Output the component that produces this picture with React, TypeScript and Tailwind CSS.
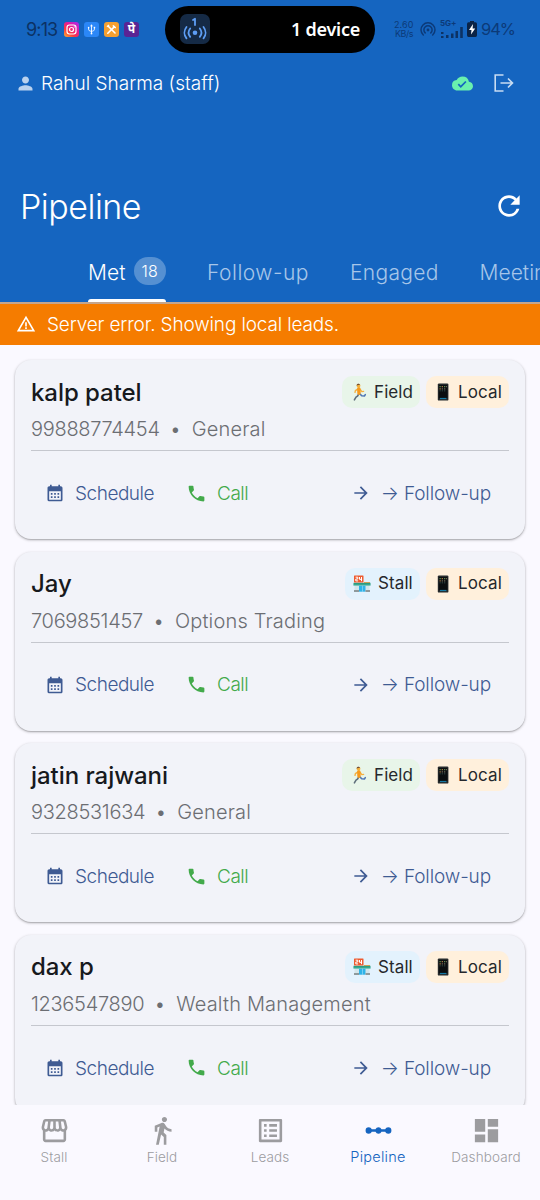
import { useState } from 'react';
import {
  MdArrowForward,
  MdCalendarMonth,
  MdCloudDone,
  MdDashboard,
  MdDirectionsWalk,
  MdLinearScale,
  MdListAlt,
  MdOutlineStorefront,
  MdPerson,
  MdPhone,
  MdRefresh,
  MdWarningAmber,
} from 'react-icons/md';

interface Lead {
  name: string;
  phone: string;
  interest: string;
  source: 'field' | 'stall';
}

const leads: Lead[] = [
  { name: 'kalp patel', phone: '99888774454', interest: 'General', source: 'field' },
  { name: 'Jay', phone: '7069851457', interest: 'Options Trading', source: 'stall' },
  { name: 'jatin rajwani', phone: '9328531634', interest: 'General', source: 'field' },
  { name: 'dax p', phone: '1236547890', interest: 'Wealth Management', source: 'stall' },
];

const navItems = [
  { label: 'Stall', icon: MdOutlineStorefront },
  { label: 'Field', icon: MdDirectionsWalk },
  { label: 'Leads', icon: MdListAlt },
  { label: 'Pipeline', icon: MdLinearScale },
  { label: 'Dashboard', icon: MdDashboard },
];

function RunnerIcon() {
  return (
    <svg viewBox="0 0 18 18" className="h-[18px] w-[18px]" fill="none" strokeLinecap="round" strokeLinejoin="round">
      <path d="M8 10.5 6.5 13.2 5 14.2 3.4 16.8" stroke="#5f6f7c" strokeWidth="1.6" />
      <path d="M8.5 10.5 10.7 12.8 13.4 13 14.3 11.6" stroke="#4f76b4" strokeWidth="1.6" />
      <path d="M7 5.8 4.4 7.6 4 9.4M9 6.2 10.8 8.6 12.6 8.4" stroke="#f5b03e" strokeWidth="1.4" />
      <path d="M7.8 5.8 8 10.2" stroke="#f79a1c" strokeWidth="3.4" />
      <circle cx="7.5" cy="2.7" r="1.9" fill="#f4b23c" />
      <path d="M5.5 2.4C5.7.7 8 .1 9.2 1.4L7.5 2Z" fill="#6d4a35" />
    </svg>
  );
}

function StoreIcon() {
  return (
    <svg viewBox="0 0 18 18" className="h-[18px] w-[18px]">
      <path d="M1.5 9.5h15V16h-15Z" fill="#d3e5ea" />
      <path d="M11 7h6v1.2h-6Z" fill="#f3a24c" />
      <path d="M.5 7.8h17v2.4H.5Z" fill="#2a9d82" />
      <path d="M.5 9.7h17v1H.5Z" fill="#62bfae" />
      <path d="M6 10.7h6.5v6H6Z" fill="#2fb3e8" />
      <path d="M9 10.7h.6v6H9Z" fill="#a5e0f7" />
      <path d="M1 15h5v2H1ZM12.5 15H17v2h-4.5Z" fill="#8f9a9c" />
      <rect x="1" y=".5" width="9.500" height="7" rx=".5" fill="#ee5a2f" />
      <path d="M2.600 2.200h2.200v1.800H2.800v1.900h2.300M6.500 2v2.300h2.600M8.500 2v4.200" fill="none" stroke="#fff" strokeWidth="1" />
    </svg>
  );
}

function MobileIcon() {
  return (
    <svg viewBox="0 0 18 18" className="h-[18px] w-[18px]">
      <rect x="3.8" y=".4" width="10.6" height="17.2" rx="1.2" fill="#252a2c" />
      <rect x="4.8" y="2" width="8.6" height="13.2" fill="#0b0e10" />
      <path d="M5.5 3h1.3v1.2H5.5ZM10 3h1.3v1.2H10Z" fill="#5c8c54" />
      <path d="M7.7 3H9v1.2H7.7ZM5.5 5.2h1.3v1.2H5.5Z" fill="#a67543" />
      <path d="M12 3h1v1.2h-1ZM7.7 5.2H9v1.2H7.7ZM10 5.2h1.3v1.2H10Z" fill="#6b6556" />
      <path d="M5.5 7.4h1.3v.9H5.5ZM7.7 7.4H9v.9H7.7ZM10 7.4h1.3v.9H10Z" fill="#3e5d58" />
      <path d="M6 14.9h6.4v1.2H6Z" fill="#167aa5" />
    </svg>
  );
}

function StatusBar() {
  return (
    <div className="flex h-[58px] items-center">
      <div className="ml-[26px] flex w-[139px] items-center">
        <span className="w-[38px] whitespace-nowrap text-[18px] tracking-[-0.85px] text-[#0c3264]">9:13</span>
        <div className="flex gap-[5px]">
          <svg viewBox="0 0 15 15" className="h-[15px] w-[15px]">
            <defs>
              <linearGradient id="insta" x1="0" y1="1" x2=".8" y2="0">
                <stop offset="0" stopColor="#ffb52e" />
                <stop offset=".35" stopColor="#fa3a3f" />
                <stop offset=".7" stopColor="#e5199b" />
                <stop offset="1" stopColor="#ae2be0" />
              </linearGradient>
            </defs>
            <rect width="15" height="15" rx="3" fill="url(#insta)" />
            <rect x="3" y="3" width="9" height="9" rx="2.4" fill="none" stroke="#fff" strokeWidth="1.2" />
            <circle cx="7.5" cy="7.5" r="2" fill="none" stroke="#fff" strokeWidth="1.2" />
            <circle cx="10.2" cy="4.9" r=".6" fill="#fff" />
          </svg>
          <svg viewBox="0 0 15 15" className="h-[15px] w-[15px]" fill="none" stroke="#fff" strokeWidth=".9">
            <rect width="15" height="15" rx="3" fill="#2b87f7" stroke="none" />
            <path d="M7.5 3.5v8M4.6 5.8v1.4c0 1.3 1 1.9 2.9 2.1M10.4 5.5v1.7c0 1.3-1 1.9-2.9 2.1" />
            <path d="M6.5 4.2 7.5 2.6l1 1.6Z" fill="#fff" strokeWidth=".4" />
            <circle cx="7.5" cy="11.5" r=".9" fill="#fff" stroke="none" />
            <circle cx="4.6" cy="5.6" r=".8" fill="#fff" stroke="none" />
            <path d="M9.7 4.8h1.5v1.4H9.7Z" fill="#fff" stroke="none" />
          </svg>
          <svg viewBox="0 0 15 15" className="h-[15px] w-[15px]" fill="none" stroke="#fff">
            <rect width="15" height="15" rx="3" fill="#f5a031" stroke="none" />
            <path d="m4.5 4.5 6.5 6.5" strokeWidth="1.6" strokeLinecap="round" />
            <path d="m3.8 11.2 6.7-6.6" strokeWidth="1.6" strokeLinecap="round" />
            <path d="M3 4.8 5 3M9.4 3.1c-.3 1.5 1 2.8 2.6 2.5" strokeWidth="1.4" />
          </svg>
          <span className="flex h-[15px] w-[15px] items-center justify-center rounded-[3px] bg-[#5b2494] font-['Noto_Sans',sans-serif] text-[12px] font-bold leading-none text-white">
            पे
          </span>
        </div>
      </div>

      <div className="flex h-[47px] w-[210px] items-center justify-between rounded-full bg-black pl-[15px] pr-[15px]">
        <div className="flex h-[30px] w-[30px] items-center justify-center rounded-[7px] bg-[#152a45]">
          <svg viewBox="0 0 30 30" className="h-[30px] w-[30px]" fill="none" stroke="#5e9ef4" strokeWidth="1.8" strokeLinecap="round">
            <path d="m13 6 2-1.2V11" strokeLinejoin="round" />
            <circle cx="15" cy="18.7" r="2.3" fill="#5e9ef4" stroke="none" />
            <path d="M10.2 14.5c-2 2.5-2 5.9 0 8.4M19.8 14.5c2 2.5 2 5.9 0 8.4M6.5 13c-2.7 3.4-2.7 8 0 11.4M23.5 13c2.7 3.4 2.7 8 0 11.4" />
          </svg>
        </div>
        <span className="font-['Noto_Sans',sans-serif] text-[18px] font-semibold tracking-[-0.25px] text-white">1 device</span>
      </div>

      <div className="ml-[19px] flex items-center text-[#0c3a78]">
        <div className="w-[26px] text-[9px] leading-[9px] tracking-[0.1px]">
          <div>2.60</div>
          <div className="pl-px tracking-[-0.5px]">KB/s</div>
        </div>
        <svg viewBox="0 0 16 16" className="h-4 w-4" fill="none" stroke="currentColor" strokeWidth="1.5" strokeLinecap="round">
          <circle cx="8" cy="9" r="1.4" fill="currentColor" stroke="none" />
          <path d="M3.3 14A7 7 0 1 1 12.7 14M5.2 11.9A4.1 4.1 0 1 1 10.8 11.9" />
        </svg>
        <div className="ml-1 flex h-[18px] w-6 flex-col justify-between">
          <div className="text-[8px] font-bold leading-[7px]">5G+</div>
          <svg viewBox="0 0 24 11" className="-mt-0.5 h-[11px] w-6" fill="#0c3264">
            <path d="M1 5h2.5v2H1ZM1 9h2.5v2H1ZM6 8h2.5v3H6ZM11 6.5h2.5V11H11ZM15.5 4H18v7h-2.5ZM20.2 0h2.6v11h-2.6Z" />
          </svg>
        </div>
        <svg viewBox="0 0 10 16" className="ml-[3px] h-4 w-[10px]">
          <path d="M3 0h4v1.3h1.5Q10 1.3 10 3v11.3Q10 16 8.5 16h-7Q0 16 0 14.3V3Q0 1.3 1.5 1.3H3Z" fill="#0b2447" />
          <path d="M6 3 2 9h2.5L4 13.5 8.2 7.5H5.6Z" fill="#fff" />
        </svg>
        <span className="ml-[4px] text-[16.5px] tracking-[-1.1px]">94%</span>
      </div>
    </div>
  );
}

function LeadCard({ lead }: { lead: Lead }) {
  return (
    <article className="h-[179px] shrink-0 rounded-2xl bg-[#f2f3f9] px-4 pt-4 shadow-[0_1px_3px_rgba(0,0,0,0.28),0_1px_1px_rgba(0,0,0,0.12)]">
      <div className="flex h-8 items-center justify-between">
        <h2 className="pt-px text-[24px] font-medium tracking-[-0.05px] text-[#17191d]">{lead.name}</h2>
        <div className="flex gap-[6px] text-[17px] tracking-[0.1px] text-[#25282c]">
          {lead.source === 'field' ? (
            <span className="flex h-8 w-[78px] items-center gap-[5px] rounded-[10px] bg-[#e8f5e9] pl-[9px]">
              <RunnerIcon />
              <span className="pt-px">Field</span>
            </span>
          ) : (
            <span className="flex h-8 w-[75px] items-center gap-[7px] rounded-[10px] bg-[#e3f2fd] pl-2">
              <StoreIcon />
              <span className="pt-px">Stall</span>
            </span>
          )}
          <span className="flex h-8 w-[83px] items-center gap-[6px] rounded-[10px] bg-[#fff0dc] pl-2">
            <MobileIcon />
            <span className="pt-px">Local</span>
          </span>
        </div>
      </div>
      <p className="flex h-[43px] items-center border-b border-[#c5c7ce] text-[20px] font-light text-[#6c6e73]">
        <span className="tracking-[-0.3px]">{lead.phone}</span>
        <span className="ml-[10px] mr-[14px] w-[8px] text-center">•</span>
        <span className="tracking-[0.17px]">{lead.interest}</span>
      </p>
      <div className="flex h-[84px] items-center text-[19px] font-light tracking-[-0.48px] text-[#3f5b93]">
        <button className="ml-[14px] flex items-center gap-[10px]">
          <MdCalendarMonth className="h-5 w-5" />
          <span className="pt-0.5">Schedule</span>
        </button>
        <button className="ml-[32px] flex items-center gap-[10px] text-[#43aa4b]">
          <MdPhone className="h-[21px] w-[21px]" />
          <span className="pt-0.5">Call</span>
        </button>
        <button className="ml-auto mr-[18px] flex items-center gap-[10px] whitespace-nowrap tracking-[-0.12px]">
          <MdArrowForward className="h-5 w-5" />
          <span className="pt-0.5">→ Follow-up</span>
        </button>
      </div>
    </article>
  );
}

export default function App() {
  const [activeNav, setActiveNav] = useState('Pipeline');

  return (
    <div className="flex h-[1200px] w-[540px] flex-col overflow-hidden bg-[#faf9ff] font-[Inter,sans-serif]">
      <header className="h-[302px] shrink-0 bg-[#1565c0] text-white">
        <StatusBar />
        <div className="flex h-[50px] items-center pl-[15px] pr-[26px]">
          <MdPerson className="h-[21px] w-[21px] text-[#bad2ee]" />
          <span className="ml-[5px] pt-0.5 text-[19px] font-light">Rahul Sharma (staff)</span>
          <MdCloudDone className="ml-auto h-[21px] w-[21px] text-[#69f0ae]" />
          <svg viewBox="0 0 20 18" className="ml-[21px] h-[18px] w-5 text-[#c8dcf2]" fill="none" stroke="currentColor" strokeWidth="1.6">
            <path d="M9.5 1H1.2v16h8.300M6.500 9h12M14 4.500 18.500 9 14 13.500" />
          </svg>
        </div>
        <div className="mt-[64px] flex h-[68px] items-center justify-between pl-[20px] pr-[15px]">
          <h1 className="text-[34px] font-light tracking-[-0.5px]">Pipeline</h1>
          <MdRefresh className="h-8 w-8" />
        </div>
        <nav className="flex h-[62px] gap-[41px] overflow-hidden pl-[88px] text-[21px] font-light text-[#a7c6e9]">
          <button className="flex h-[62px] w-[78px] shrink-0 flex-col text-white">
            <span className="flex h-[59px] items-center gap-2 pt-[3px]">
              <span className="pt-[3px] tracking-[0.1px]">Met</span>
              <span className="flex h-[28px] w-8 items-center justify-center rounded-[14px] bg-[#5590d2] text-[16px]">18</span>
            </span>
            <span className="h-[3px] w-full rounded-t-[3px] bg-white" />
          </button>
          <button className="h-[62px] shrink-0 whitespace-nowrap pt-[3px] tracking-[0.5px]">Follow-up</button>
          <button className="h-[62px] shrink-0 pt-[3px] tracking-[0.3px]">Engaged</button>
          <button className="h-[62px] shrink-0 pt-[3px]">Meeting</button>
        </nav>
      </header>

      {/* Offline notice */}
      <div className="flex h-[42.5px] shrink-0 items-center border-t-2 border-[#c5a58c] bg-[#f57c00] pl-4 text-[19px] font-light tracking-[-0.15px] text-white">
        <MdWarningAmber className="h-5 w-5" />
        <span className="ml-[11px] pt-0.5">Server error. Showing local leads.</span>
      </div>

      <main className="flex min-h-0 flex-1 flex-col gap-[12.67px] overflow-hidden px-[15px] pt-[15.5px]">
        {leads.map((lead) => (
          <LeadCard key={lead.phone} lead={lead} />
        ))}
      </main>

      <nav className="grid h-[95px] shrink-0 grid-cols-5 bg-[#faf9ff]">
        {navItems.map(({ label, icon: Icon }) => (
          <button
            key={label}
            onClick={() => setActiveNav(label)}
            className={`flex flex-col items-center pt-[10px] ${activeNav === label ? 'text-[#1565c0]' : 'text-[#9c9c9f]'}`}
          >
            <Icon className="h-[31px] w-[31px]" />
            <span className={`mt-px leading-[20px] ${activeNav === label ? 'text-[14.5px] font-[350] tracking-[0.25px]' : 'text-[13.5px] font-light tracking-[0.1px]'}`}>
              {label}
            </span>
          </button>
        ))}
      </nav>
    </div>
  );
}
